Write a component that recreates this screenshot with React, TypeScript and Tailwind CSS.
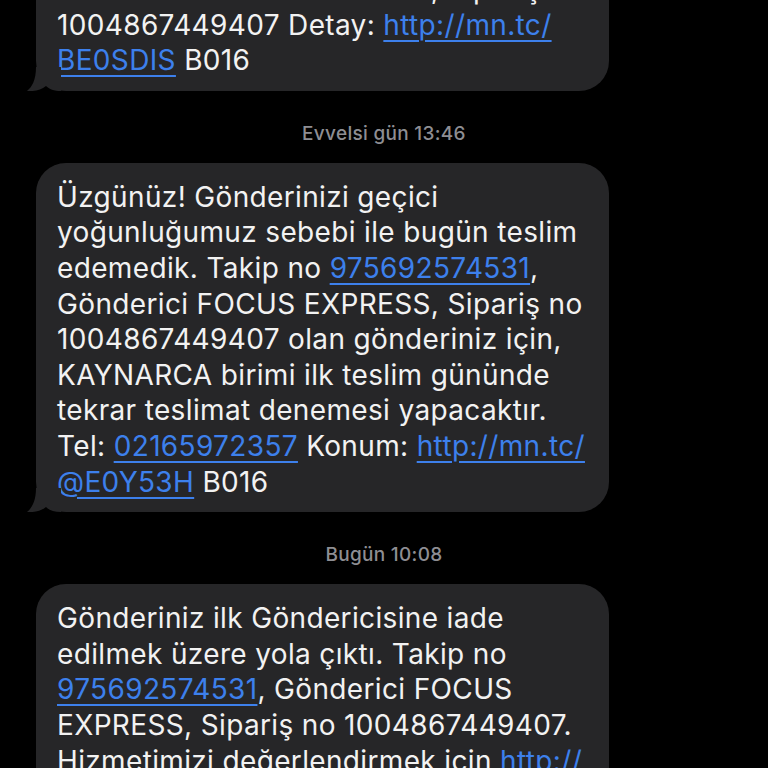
import type { ReactNode } from "react";

const font = { fontFamily: "Inter, 'Noto Sans', sans-serif" };

function Link({ children }: { children: ReactNode }) {
  return (
    <span className="text-[#3d80ec] underline decoration-2 underline-offset-[5px]">
      {children}
    </span>
  );
}

function Tail() {
  return (
    <svg
      className="absolute bottom-0 left-[-9px]"
      width="40"
      height="24"
      viewBox="0 0 40 24"
      aria-hidden
    >
      <path
        d="M9 0 C9 13 5 20 0 24 C8 24.5 14 23 19 19 C22 22 27 24 34 24 L34 0 Z"
        fill="#262628"
      />
    </svg>
  );
}

function Bubble({ lines }: { lines: ReactNode[] }) {
  return (
    <div className="relative ml-9 w-[573px]">
      <div className="relative rounded-[30px] bg-[#262628] pb-[12px] pl-[21px] pr-4 pt-[17px] text-[28px] leading-[35.6px] tracking-[0.35px] text-[#f2f2f2]">
        {lines.map((l, i) => (
          <div key={i} className="whitespace-nowrap">
            {l}
          </div>
        ))}
      </div>
      <Tail />
    </div>
  );
}

function Stamp({ children }: { children: ReactNode }) {
  return (
    <p className="mb-[18px] mt-[32px] text-center text-[19px] font-medium leading-[22px] tracking-[0.3px] text-[#8e8e93]">
      {children}
    </p>
  );
}

export default function App() {
  return (
    <div className="h-[768px] w-[768px] overflow-hidden bg-black" style={font}>
      <div className="-mt-[45px]">
        <Bubble
          lines={[
            "Gönderici FOCUS EXPRESS, Sipariş no",
            <>
              1004867449407 Detay: <Link>http://mn.tc/</Link>
            </>,
            <>
              <Link>BE0SDIS</Link> B016
            </>,
          ]}
        />
        <Stamp>Evvelsi gün 13:46</Stamp>
        <Bubble
          lines={[
            "Üzgünüz! Gönderinizi geçici",
            "yoğunluğumuz sebebi ile bugün teslim",
            <>
              edemedik. Takip no <Link>975692574531</Link>,
            </>,
            "Gönderici FOCUS EXPRESS, Sipariş no",
            "1004867449407 olan gönderiniz için,",
            "KAYNARCA birimi ilk teslim gününde",
            "tekrar teslimat denemesi yapacaktır.",
            <>
              Tel: <Link>02165972357</Link> Konum: <Link>http://mn.tc/</Link>
            </>,
            <>
              <Link>@E0Y53H</Link> B016
            </>,
          ]}
        />
        <Stamp>Bugün 10:08</Stamp>
        <Bubble
          lines={[
            "Gönderiniz ilk Göndericisine iade",
            "edilmek üzere yola çıktı. Takip no",
            <>
              <Link>975692574531</Link>, Gönderici FOCUS
            </>,
            "EXPRESS, Sipariş no 1004867449407.",
            <>
              Hizmetimizi değerlendirmek için <Link>http://</Link>
            </>,
            "mn.tc/",
          ]}
        />
      </div>
    </div>
  );
}
